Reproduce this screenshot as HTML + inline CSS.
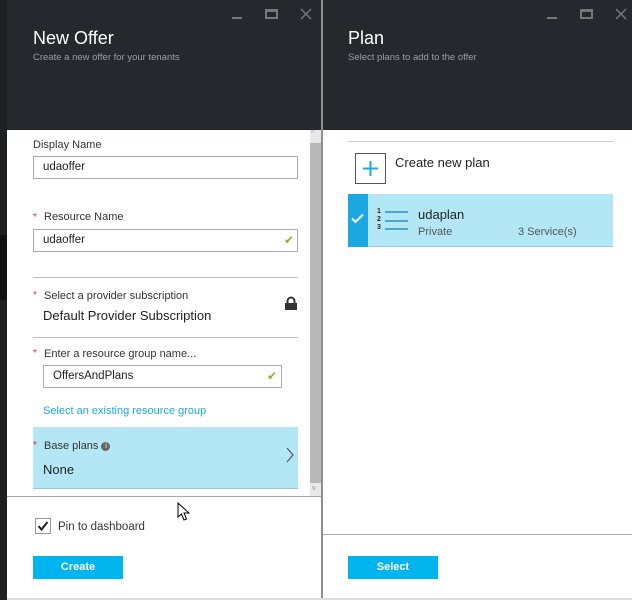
<!DOCTYPE html>
<html><head><style>
*{margin:0;padding:0;box-sizing:border-box}
body{width:632px;height:600px;overflow:hidden;background:#fff;font-family:"Liberation Sans",sans-serif;position:relative;color:#222}
.a{position:absolute}
.hd{background:#25282d}
.t{color:#fff;font-size:18px}
.st{color:#9a9ea5;font-size:9.5px}
.lb{font-size:11px;color:#333}
.inp{border:1px solid #ababab;background:#fff;font-size:11.5px;padding-left:9px;line-height:21px}
.req{color:#e0303a;font-size:10px}
.ck{color:#7ab829;font-size:12px}
.btn{background:#00b4ee;color:#fff;font-weight:bold;font-size:11px;text-align:center;line-height:23px}
.sep{height:1px;background:#bdbdbd}
</style></head><body>
<div class="a" style="left:0;top:0;width:7px;height:600px;background:#1d1f22"></div>
<div class="a" style="left:0;top:235px;width:7px;height:65px;background:#101113"></div>
<div class="a hd" style="left:7px;top:0;width:314px;height:130px"></div>
<div class="a hd" style="left:323px;top:0;width:309px;height:130px"></div>
<div class="a" style="left:321px;top:0;width:2px;height:600px;background:#8e8e8e"></div>
<div class="a" style="left:7px;top:598px;width:625px;height:2px;background:#ddd"></div>
<div class="a t" style="left:33px;top:28px">New Offer</div>
<div class="a st" style="left:33px;top:52px">Create a new offer for your tenants</div>
<div class="a" style="left:232px;top:17px;width:10px;height:2px;background:#777"></div>
<div class="a" style="left:265px;top:9px;width:13px;height:10px;border:2px solid #777;border-top-width:3px"></div>
<svg class="a" style="left:300px;top:8px" width="12" height="12"><path d="M1 1L11 11M11 1L1 11" stroke="#777" stroke-width="1.5"/></svg>
<div class="a t" style="left:348px;top:28px">Plan</div>
<div class="a st" style="left:348px;top:52px">Select plans to add to the offer</div>
<div class="a" style="left:547px;top:17px;width:10px;height:2px;background:#777"></div>
<div class="a" style="left:580px;top:9px;width:13px;height:10px;border:2px solid #777;border-top-width:3px"></div>
<svg class="a" style="left:615px;top:8px" width="12" height="12"><path d="M1 1L11 11M11 1L1 11" stroke="#777" stroke-width="1.5"/></svg>
<div class="a" style="left:310px;top:130px;width:11px;height:366px;background:#e8e8e8"></div>
<div class="a" style="left:310px;top:143px;width:11px;height:340px;background:#b8b8b8"></div>
<div class="a" style="left:311px;top:130px;font-size:7px;color:#999">^</div>
<div class="a" style="left:312px;top:485px;font-size:7px;color:#999">v</div>
<div class="a lb" style="left:33px;top:139px">Display Name</div>
<div class="a inp" style="left:33px;top:156px;width:265px;height:23px">udaoffer</div>
<div class="a req" style="left:33px;top:212px">*</div>
<div class="a lb" style="left:44px;top:211px">Resource Name</div>
<div class="a inp" style="left:33px;top:229px;width:265px;height:23px">udaoffer</div>
<div class="a ck" style="left:284px;top:233px">✔</div>
<div class="a sep" style="left:33px;top:277px;width:265px"></div>
<div class="a req" style="left:33px;top:290px">*</div>
<div class="a lb" style="left:44px;top:290px">Select a provider subscription</div>
<div class="a" style="left:43px;top:308px;font-size:13px;color:#222">Default Provider Subscription</div>
<svg class="a" style="left:284px;top:296px" width="14" height="15"><path d="M3.5 7V5a3.5 3.5 0 0 1 7 0v2" stroke="#333" stroke-width="2" fill="none"/><rect x="1" y="7" width="12" height="7" fill="#333"/></svg>
<div class="a sep" style="left:33px;top:337px;width:265px"></div>
<div class="a req" style="left:33px;top:348px">*</div>
<div class="a lb" style="left:44px;top:348px">Enter a resource group name...</div>
<div class="a inp" style="left:43px;top:365px;width:239px;height:23px">OffersAndPlans</div>
<div class="a ck" style="left:267px;top:369px">✔</div>
<div class="a" style="left:43px;top:405px;font-size:11px;color:#1ea9dd">Select an existing resource group</div>
<div class="a" style="left:33px;top:427px;width:265px;height:62px;background:#b4e7f6;border-bottom:1px solid #9ccbd8"></div>
<div class="a req" style="left:33px;top:440px">*</div>
<div class="a lb" style="left:44px;top:440px">Base plans <span style="display:inline-block;width:9px;height:9px;border-radius:50%;background:#666;color:#fff;font-size:7px;text-align:center;line-height:9px;vertical-align:1px">i</span></div>
<div class="a" style="left:43px;top:462px;font-size:13px">None</div>
<svg class="a" style="left:286px;top:447px" width="8" height="16"><path d="M1 1L7 8L1 15" stroke="#555" fill="none" stroke-width="1.2"/></svg>
<div class="a sep" style="left:7px;top:496px;width:314px;background:#aaa"></div>
<div class="a" style="left:35px;top:518px;width:16px;height:16px;border:1px solid #999;background:#fff"></div>
<svg class="a" style="left:37px;top:520px" width="12" height="12"><path d="M1.5 6L4.5 9.5L10.5 2" stroke="#222" stroke-width="2" fill="none"/></svg>
<div class="a lb" style="left:58px;top:521px;font-size:11.5px">Pin to dashboard</div>
<div class="a btn" style="left:33px;top:556px;width:90px;height:23px">Create</div>
<svg class="a" style="left:177px;top:502px" width="14" height="20"><path d="M1 1L1 15L4.5 12L7 18L9.5 17L7 11L12 11Z" fill="#fff" stroke="#000" stroke-width="1"/></svg>
<div class="a sep" style="left:348px;top:141px;width:265px;background:#ccc"></div>
<div class="a" style="left:355px;top:153px;width:31px;height:31px;border:1px solid #555"></div>
<svg class="a" style="left:362px;top:160px" width="17" height="17"><path d="M8.5 1V16M1 8.5H16" stroke="#1ea9dd" stroke-width="2"/></svg>
<div class="a" style="left:395px;top:155px;font-size:13px;color:#222">Create new plan</div>
<div class="a" style="left:348px;top:194px;width:265px;height:53px;background:#b4e7f6;border-bottom:1px solid #9ccbd8"></div>
<div class="a" style="left:348px;top:194px;width:20px;height:53px;background:#1ba7e0"></div>
<svg class="a" style="left:351px;top:213px" width="13" height="11"><path d="M1 5.5L4.5 9L12 1.5" stroke="#fff" stroke-width="2" fill="none"/></svg>
<div class="a" style="left:377px;top:208px;font-size:7px;font-weight:bold;line-height:8px;color:#222">1<br>2<br>3</div>
<div class="a" style="left:385px;top:211px;width:23px;height:2px;background:#4aa8d0"></div>
<div class="a" style="left:385px;top:220px;width:23px;height:2px;background:#4aa8d0"></div>
<div class="a" style="left:385px;top:228px;width:23px;height:2px;background:#4aa8d0"></div>
<div class="a" style="left:418px;top:207px;font-size:13px">udaplan</div>
<div class="a" style="left:418px;top:226px;font-size:11px;color:#555">Private</div>
<div class="a" style="left:518px;top:226px;font-size:11px;color:#555">3 Service(s)</div>
<div class="a sep" style="left:323px;top:534px;width:309px;background:#aaa"></div>
<div class="a btn" style="left:348px;top:556px;width:90px;height:23px">Select</div>
</body></html>
